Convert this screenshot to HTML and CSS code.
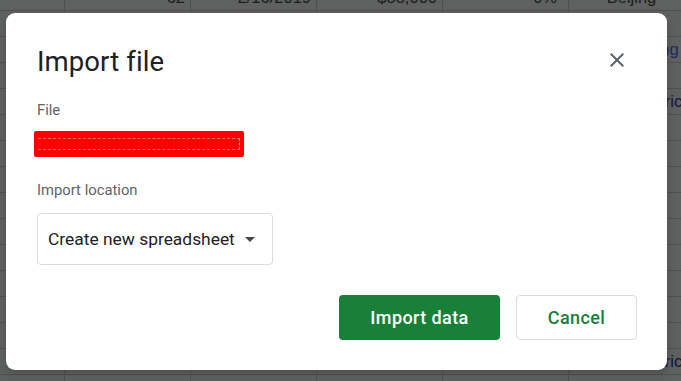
FILE: index.html
```html
<!DOCTYPE html>
<html lang="en">
<head>
<meta charset="utf-8">
<title>Import file</title>
<link rel="stylesheet" href="styles.css">
</head>
<body>
<div class="sheet">
  <div class="row"><div class="cell first"></div><div class="cell num">62</div><div class="cell num">2/16/2019</div><div class="cell num">$88,000</div><div class="cell num pct">0%</div><div class="cell mid">Beijing</div></div>
  <div class="row"><div class="cell first"></div><div class="cell"></div><div class="cell"></div><div class="cell"></div><div class="cell"></div><div class="cell"></div></div>
  <div class="row"><div class="cell first"></div><div class="cell"></div><div class="cell"></div><div class="cell"></div><div class="cell"></div><div class="cell region link">Hong Kong</div></div>
  <div class="row"><div class="cell first"></div><div class="cell"></div><div class="cell"></div><div class="cell"></div><div class="cell"></div><div class="cell"></div></div>
  <div class="row"><div class="cell first"></div><div class="cell"></div><div class="cell"></div><div class="cell"></div><div class="cell"></div><div class="cell region2 navy">South America</div></div>
  <div class="row"><div class="cell first"></div><div class="cell"></div><div class="cell"></div><div class="cell"></div><div class="cell"></div><div class="cell"></div></div>
  <div class="row"><div class="cell first"></div><div class="cell"></div><div class="cell"></div><div class="cell"></div><div class="cell"></div><div class="cell"></div></div>
  <div class="row"><div class="cell first"></div><div class="cell"></div><div class="cell"></div><div class="cell"></div><div class="cell"></div><div class="cell"></div></div>
  <div class="row"><div class="cell first"></div><div class="cell"></div><div class="cell"></div><div class="cell"></div><div class="cell"></div><div class="cell"></div></div>
  <div class="row"><div class="cell first"></div><div class="cell"></div><div class="cell"></div><div class="cell"></div><div class="cell"></div><div class="cell"></div></div>
  <div class="row"><div class="cell first"></div><div class="cell"></div><div class="cell"></div><div class="cell"></div><div class="cell"></div><div class="cell"></div></div>
  <div class="row"><div class="cell first"></div><div class="cell"></div><div class="cell"></div><div class="cell"></div><div class="cell"></div><div class="cell"></div></div>
  <div class="row"><div class="cell first"></div><div class="cell"></div><div class="cell"></div><div class="cell"></div><div class="cell"></div><div class="cell region3 navy">Toronto</div></div>
  <div class="row"><div class="cell first"></div><div class="cell"></div><div class="cell"></div><div class="cell"></div><div class="cell"></div><div class="cell"></div></div>
  <div class="row"><div class="cell first"></div><div class="cell"></div><div class="cell"></div><div class="cell"></div><div class="cell"></div><div class="cell region2 navy">South America</div></div>
  <div class="row"><div class="cell first"></div><div class="cell"></div><div class="cell"></div><div class="cell"></div><div class="cell"></div><div class="cell"></div></div>
</div>

<div class="dialog">
  <div class="dialog-header">
    <h1 class="dialog-title">Import file</h1>
    <button class="close-btn" aria-label="Close">
      <svg viewBox="0 0 24 24" width="24" height="24"><path d="M19 6.41L17.59 5 12 10.59 6.41 5 5 6.41 10.59 12 5 17.59 6.41 19 12 13.41 17.59 19 19 17.59 13.41 12z" fill="#5f6368"/></svg>
    </button>
  </div>
  <div class="label">File</div>
  <div class="redacted"><span class="scribble"></span></div>
  <div class="label label-loc">Import location</div>
  <div class="select">
    <span class="select-text">Create new spreadsheet</span>
    <svg class="arrow" viewBox="0 0 24 24" width="24" height="24"><path d="M7 10l5 5 5-5z" fill="#444746"/></svg>
  </div>
  <div class="actions">
    <button class="btn primary">Import data</button>
    <button class="btn secondary">Cancel</button>
  </div>
</div>
</body>
</html>
```

FILE: styles.css
```css
* { box-sizing: border-box; }

html, body {
  margin: 0;
  padding: 0;
  width: 681px;
  height: 381px;
  overflow: hidden;
  background: #5f6060;
}

body {
  position: relative;
  font-family: Roboto, "Liberation Sans", sans-serif;
}

.sheet {
  margin-top: -15px;
  font-family: "Liberation Sans", Arial, sans-serif;
  font-size: 16.5px;
  color: #1c1c1c;
}

.row {
  display: flex;
  height: 26px;
  border-bottom: 1px solid #4f5050;
}

.cell {
  flex: 0 0 126px;
  border-right: 1px solid #4f5050;
  display: flex;
  align-items: center;
  padding: 0 5px;
  white-space: nowrap;
}

.cell.first { flex-basis: 65px; }
.cell.num { justify-content: flex-end; }
.cell.pct { padding-right: 11px; }
.cell.mid { justify-content: center; }
.cell.region { padding-left: 27px; }
.cell.region2 { padding-left: 15px; }
.cell.region3 { padding-left: 38px; }
.cell.link { color: #1b2a63; }
.cell.navy { color: #14163a; }

.dialog {
  position: absolute;
  left: 6px;
  top: 13px;
  width: 661px;
  background: #fff;
  border-radius: 9px;
  padding: 33px 30px 30px 31px;
  box-shadow: 0 4px 10px rgba(0, 0, 0, 0.18);
}

.dialog-header {
  display: flex;
  align-items: center;
  justify-content: space-between;
  height: 32px;
}

.dialog-title {
  margin: 0;
  font-family: Roboto, sans-serif;
  font-weight: 400;
  font-size: 27.5px;
  line-height: 32px;
  color: #202124;
  letter-spacing: 0.1px;
}

.close-btn {
  border: 0;
  background: none;
  padding: 0;
  margin-right: 8px;
  margin-top: -4px;
  width: 24px;
  height: 24px;
  display: flex;
}

.label {
  margin-top: 22px;
  font-size: 14.8px;
  line-height: 20px;
  color: #5f6368;
}

.redacted {
  margin-top: 11px;
  margin-left: -3px;
  width: 210px;
  height: 26px;
  background: #ff0000;
  border-radius: 2px;
  display: flex;
  align-items: center;
  padding: 0 4px;
}

.scribble {
  display: block;
  width: 100%;
  height: 12px;
  border-top: 1px dashed #ff6a6a;
  border-bottom: 1px dashed #ff6a6a;
  border-right: 1px dashed #ffb0b0;
}

.label-loc {
  margin-top: 23px;
}

.select {
  margin-top: 13px;
  width: 236px;
  height: 52px;
  border: 1px solid #dadce0;
  border-radius: 4px;
  display: flex;
  align-items: center;
  justify-content: space-between;
  padding: 0 10px 0 10px;
}

.select-text {
  font-size: 17.4px;
  color: #202124;
}

.arrow {
  display: block;
}

.actions {
  margin-top: 30px;
  display: flex;
  justify-content: flex-end;
  gap: 16px;
}

.btn {
  height: 45px;
  border-radius: 4px;
  font-family: Roboto, sans-serif;
  font-size: 18px;
  font-weight: 500;
  letter-spacing: 0.4px;
  cursor: pointer;
}

.btn.primary {
  width: 161px;
  background: #188038;
  color: #fff;
  border: 0;
}

.btn.secondary {
  width: 121px;
  background: #fff;
  color: #188038;
  border: 1px solid #dadce0;
}
```
